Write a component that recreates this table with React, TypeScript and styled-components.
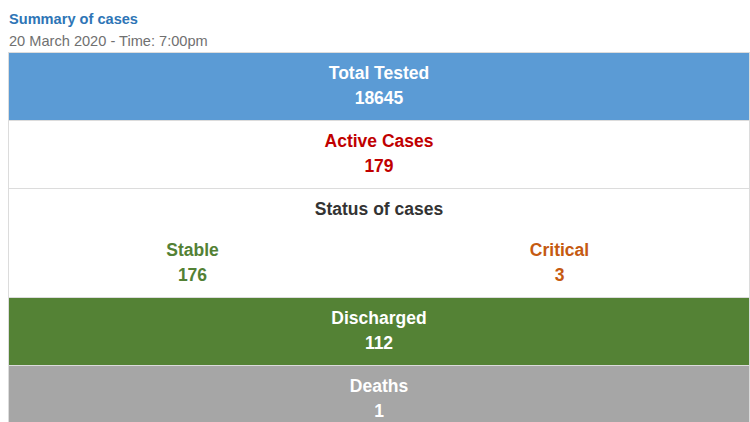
import React from "react";
import styled, { createGlobalStyle } from "styled-components";

const Global = createGlobalStyle`
  html, body { margin: 0; padding: 0; background: #fff; }
  body { padding: 8px; font-family: "Liberation Sans", Arial, sans-serif; }
`;

const Header = styled.div`
  line-height: 22px;
  font-size: 14.6px;
  padding-left: 1px;
`;

const Title = styled.div`
  color: #2e75b6;
  font-weight: bold;
`;

const DateLine = styled.div`
  color: #707070;
`;

const Table = styled.div`
  width: 740px;
  border: 1px solid #dcdcdc;
  border-bottom: none;
  display: flex;
  flex-direction: column;
`;

const Row = styled.div<{ $bg: string; $fg: string }>`
  background: ${(p) => p.$bg};
  color: ${(p) => p.$fg};
  border-bottom: 1px solid #dcdcdc;
  padding: 8px 0 9px;
  text-align: center;
  font-weight: bold;
  font-size: 17.5px;
  line-height: 25px;
`;

const Heading = styled.div`
  color: #333;
  margin-bottom: 16px;
`;

const Split = styled.div`
  display: grid;
  grid-template-columns: 1fr 1fr;
  padding-right: 6px;
`;

const Cell = styled.div<{ $fg: string }>`
  color: ${(p) => p.$fg};
`;

export default function App() {
  return (
    <>
      <Global />
      <Header>
        <Title>Summary of cases</Title>
        <DateLine>20 March 2020 - Time: 7:00pm</DateLine>
      </Header>
      <Table>
        <Row $bg="#5b9bd5" $fg="#fff">
          <div>Total Tested</div>
          <div>18645</div>
        </Row>
        <Row $bg="#fff" $fg="#c00000">
          <div>Active Cases</div>
          <div>179</div>
        </Row>
        <Row $bg="#fff" $fg="#333">
          <Heading>Status of cases</Heading>
          <Split>
            <Cell $fg="#538135">
              <div>Stable</div>
              <div>176</div>
            </Cell>
            <Cell $fg="#c55a11">
              <div>Critical</div>
              <div>3</div>
            </Cell>
          </Split>
        </Row>
        <Row $bg="#548235" $fg="#fff">
          <div>Discharged</div>
          <div>112</div>
        </Row>
        <Row $bg="#a6a6a6" $fg="#fff">
          <div>Deaths</div>
          <div>1</div>
        </Row>
      </Table>
    </>
  );
}
